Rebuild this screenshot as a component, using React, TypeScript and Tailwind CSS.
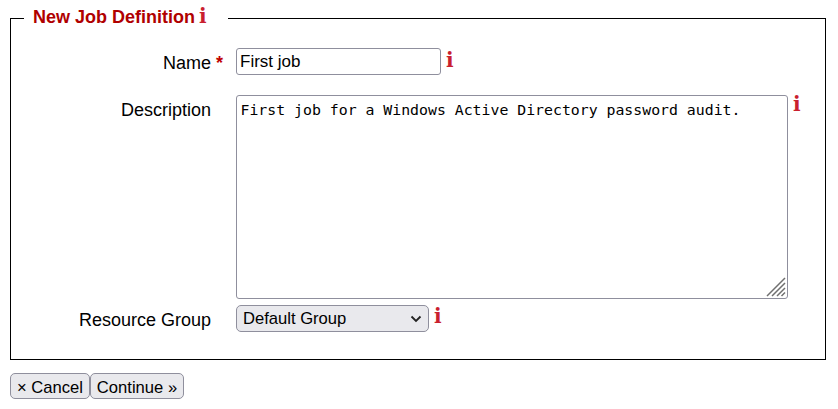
import React from "react";

function Info({ className = "" }: { className?: string }) {
  return (
    <span className={`font-['DejaVu_Serif',serif] font-bold text-[20px] leading-[22px] text-[#c9202e] ${className}`}>i</span>
  );
}

export default function App() {
  return (
    <div className="w-[838px] h-[409px] bg-white font-['Liberation_Sans',Arial,sans-serif] text-[18px] text-black overflow-hidden">
      <div className="px-[10px] pt-[7px]">
        <fieldset className="border border-black w-[816px] h-[353px] px-[13px] m-0 min-w-0">
          <legend className="px-[9px] ml-0 h-[22px] w-[204px] flex items-center pb-[2px] font-bold text-[#b00000]">
            New Job Definition<Info className="ml-[4px] -mt-[3px]" />
          </legend>
          <div className="flex flex-col -mx-[3px]">
            <div className="flex h-[27px] mt-[19px]">
              <label className="w-[215px] shrink-0 relative text-right pr-[25px] pt-[5px] leading-[20px]">
                Name<span className="absolute left-[195px] top-[5px] text-[#c00000] font-bold">*</span>
              </label>
              <input defaultValue="First job" className="w-[205px] h-[27px] border border-[#8f8f9d] rounded-[3px] pl-[3px] pr-[4px] outline-none font-['Liberation_Sans',Arial,sans-serif] text-[17px] bg-white" />
              <Info className="ml-[5px] mt-[1px]" />
            </div>
            <div className="flex h-[204px] mt-[20px]">
              <label className="w-[215px] shrink-0 text-right pr-[25px] pt-[5px] leading-[20px]">Description</label>
              <div className="relative w-[552px] h-[204px]">
                <textarea defaultValue="First job for a Windows Active Directory password audit." className="block w-full h-full resize-none border border-[#8f8f9d] rounded-[3px] pl-[3.5px] pr-[4px] py-[5px] outline-none font-['DejaVu_Sans_Mono',monospace] text-[14.83px] leading-[18px] bg-white" />
                <svg className="absolute right-[2px] bottom-[2px]" width="20" height="20" viewBox="0 0 20 20" stroke="#707070" strokeWidth="1.5">
                  <path d="M1 19L19 1M6 19L19 6M11 19L19 11M15.5 19L19 15.5" />
                </svg>
              </div>
              <Info className="ml-[5px] -mt-[2px]" />
            </div>
            <div className="flex h-[27px] mt-[6px]">
              <label className="w-[215px] shrink-0 text-right pr-[25px] pt-[5px] leading-[20px]">Resource Group</label>
              <div className="relative w-[193px] h-[27px]">
                <select defaultValue="Default Group" className="appearance-none block w-full h-full border border-[#8f8f9d] rounded-[5px] pl-[6px] pr-[6px] pt-[1px] bg-[#e9e9ed] outline-none font-['Liberation_Sans',Arial,sans-serif] text-[16.6px]">
                  <option>Default Group</option>
                </select>
                <svg className="absolute right-[6px] top-[10px] pointer-events-none" width="14" height="8" viewBox="0 0 14 8" fill="none" stroke="#222" strokeWidth="1.8">
                  <path d="M2.5 1.5L7 6L11.5 1.5" />
                </svg>
              </div>
              <Info className="ml-[5px] mt-[0px]" />
            </div>
          </div>
        </fieldset>
        <div className="flex mt-[13px]">
          <button className="w-[80px] h-[26px] border border-[#8f8f9d] rounded-[5px] bg-[#e9e9ed] text-center pt-[3px] leading-[22px] text-[16.6px]">× Cancel</button>
          <button className="w-[94px] h-[26px] border border-[#8f8f9d] rounded-[5px] bg-[#e9e9ed] text-center pt-[3px] leading-[22px] text-[16.6px]">Continue »</button>
        </div>
      </div>
    </div>
  );
}
